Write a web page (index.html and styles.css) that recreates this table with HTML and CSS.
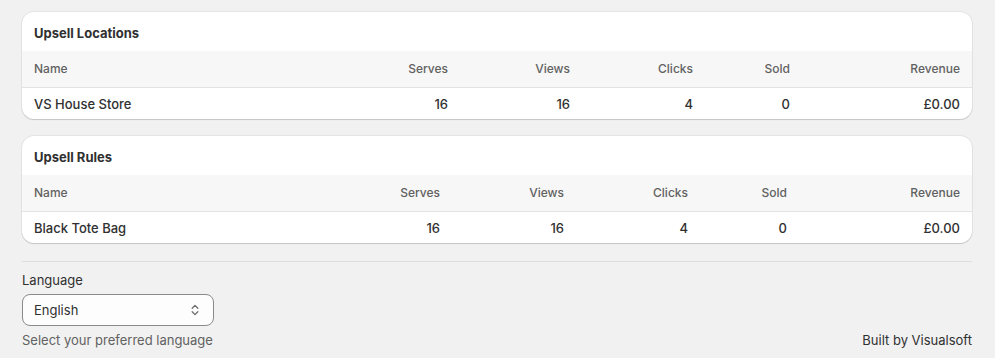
FILE: index.html
```html
<!DOCTYPE html>
<html lang="en">
<head>
<meta charset="utf-8">
<title>Upsell Analytics</title>
<link rel="stylesheet" href="styles.css">
</head>
<body>
<main class="page">
  <section class="card">
    <h2 class="card-title">Upsell Locations</h2>
    <table class="data t1">
      <colgroup>
        <col class="c-name"><col class="c-serves"><col class="c-views"><col class="c-clicks"><col class="c-sold"><col class="c-rev">
      </colgroup>
      <thead>
        <tr><th class="left">Name</th><th>Serves</th><th>Views</th><th>Clicks</th><th>Sold</th><th>Revenue</th></tr>
      </thead>
      <tbody>
        <tr><td class="left">VS House Store</td><td>16</td><td>16</td><td>4</td><td>0</td><td>£0.00</td></tr>
      </tbody>
    </table>
  </section>

  <section class="card">
    <h2 class="card-title">Upsell Rules</h2>
    <table class="data t2">
      <colgroup>
        <col class="c-name"><col class="c-serves"><col class="c-views"><col class="c-clicks"><col class="c-sold"><col class="c-rev">
      </colgroup>
      <thead>
        <tr><th class="left">Name</th><th>Serves</th><th>Views</th><th>Clicks</th><th>Sold</th><th>Revenue</th></tr>
      </thead>
      <tbody>
        <tr><td class="left">Black Tote Bag</td><td>16</td><td>16</td><td>4</td><td>0</td><td>£0.00</td></tr>
      </tbody>
    </table>
  </section>

  <hr class="divider">

  <footer class="footer">
    <div class="field">
      <label class="field-label" for="lang">Language</label>
      <div class="select">
        <span class="select-value">English</span>
        <svg class="select-icon" width="8" height="12" viewBox="0 0 8 12" aria-hidden="true">
          <polyline points="1.2,4.2 4,1.4 6.8,4.2" fill="none" stroke="#6b6b6b" stroke-width="1.3" stroke-linecap="round" stroke-linejoin="round"/>
          <polyline points="1.2,7.8 4,10.6 6.8,7.8" fill="none" stroke="#6b6b6b" stroke-width="1.3" stroke-linecap="round" stroke-linejoin="round"/>
        </svg>
      </div>
      <p class="help">Select your preferred language</p>
    </div>
    <p class="credit">Built by Visualsoft</p>
  </footer>
</main>
</body>
</html>
```

FILE: styles.css
```css
* { box-sizing: border-box; }

body {
  margin: 0;
  background: #f1f1f1;
  color: #303030;
  font-family: Inter, "Noto Sans", "Liberation Sans", sans-serif;
  font-size: 13px;
  line-height: 20px;
}

.page {
  padding: 12px 23px 0 22px;
  display: flex;
  flex-direction: column;
  gap: 17px;
}

.card {
  background: #ffffff;
  border-radius: 12px;
  overflow: hidden;
  box-shadow: 0 0 0 1px rgba(0, 0, 0, 0.05), 0 1px 1px rgba(0, 0, 0, 0.14);
}

.card-title {
  margin: 0;
  padding: 11px 12px 8px;
  font-size: 13px;
  font-weight: 650;
  line-height: 20px;
  color: #303030;
}

.data {
  width: 100%;
  border-collapse: collapse;
  table-layout: fixed;
}

.data th,
.data td {
  text-align: right;
  padding: 8px 12px;
  white-space: nowrap;
}

.data th {
  background: #f7f7f7;
  color: #616161;
  font-weight: 550;
  font-size: 12px;
  border-bottom: 1px solid #e3e3e3;
}

.data td {
  padding-top: 6px;
  padding-bottom: 5px;
  color: #303030;
  font-weight: 450;
}

.data .left { text-align: left; }

.t1 .c-name { width: 316px; }
.t1 .c-serves { width: 122px; }
.t1 .c-views { width: 122px; }
.t1 .c-clicks { width: 123px; }
.t1 .c-sold { width: 97px; }
.t1 .c-rev { width: 170px; }

.t2 .c-name { width: 306px; }
.t2 .c-serves { width: 124px; }
.t2 .c-views { width: 124px; }
.t2 .c-clicks { width: 124px; }
.t2 .c-sold { width: 99px; }
.t2 .c-rev { width: 173px; }

.divider {
  margin: 1px 0 0;
  border: 0;
  border-top: 1px solid #dedede;
}

.footer {
  margin-top: -9px;
  display: flex;
  justify-content: space-between;
  align-items: flex-end;
}

.field {
  display: flex;
  flex-direction: column;
  gap: 4px;
}

.field-label {
  color: #303030;
}

.select {
  width: 192px;
  height: 32px;
  border: 1px solid #8a8a8a;
  border-radius: 8px;
  background: #fdfdfd;
  display: flex;
  align-items: center;
  justify-content: space-between;
  padding: 0 14px 0 11px;
}

.select-value { color: #303030; }

.help {
  margin: 0;
  color: #616161;
}

.credit {
  margin: 0;
  color: #303030;
}
```
